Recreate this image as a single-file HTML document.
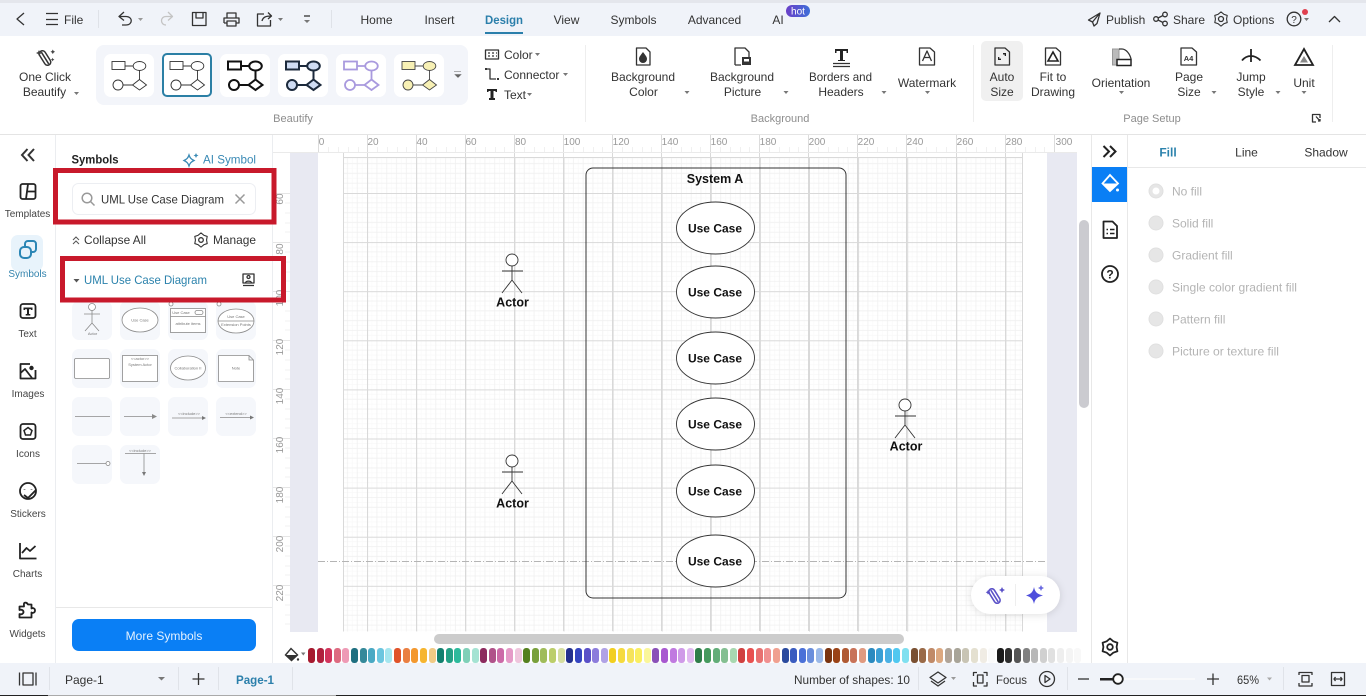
<!DOCTYPE html>
<html lang="en"><head><meta charset="utf-8"><title>UML Use Case Diagram</title>
<style>
html,body{margin:0;padding:0;background:#fff}
#p{position:relative;width:1366px;height:696px;overflow:hidden;background:#fff}
svg{position:absolute;left:0;top:0}
text{font-family:"Liberation Sans",sans-serif;font-size:12px;fill:#333}
.m{text-anchor:middle}
.l{font-size:11px;fill:#8d8d8d}
.s{font-size:10px;fill:#444;text-anchor:middle}
.r{font-size:10px;fill:#999;text-anchor:middle}
.g{fill:#b4b4b4}
.b{font-weight:bold;fill:#111;text-anchor:middle}
.i{fill:none;stroke:#333;stroke-width:1.3;stroke-linejoin:round}
.k{fill:none;stroke:#222;stroke-width:1.8;stroke-linejoin:round}
.t{font-size:4px;fill:#777;text-anchor:middle}
#c{position:absolute;left:308px;top:647.5px;display:flex}
#c i{display:block;width:7px;height:15px;border-radius:3px;margin-right:1.62px}
</style></head><body><div id="p">
<svg width="1366" height="696" viewBox="0 0 1366 696">
<defs>
<pattern id="gr" width="49.1" height="49.1" patternUnits="userSpaceOnUse" patternTransform="translate(318 193)">
<path d="M4.9 0V49.1M14.73 0V49.1M24.55 0V49.1M34.37 0V49.1M44.2 0V49.1M0 4.9H49.1M0 14.73H49.1M0 24.55H49.1M0 34.37H49.1M0 44.2H49.1" stroke="#f8f8f8" stroke-width=".6" fill="none"/>
<path d="M9.82 0V49.1M19.64 0V49.1M29.46 0V49.1M39.28 0V49.1M0 9.82H49.1M0 19.64H49.1M0 29.46H49.1M0 39.28H49.1" stroke="#f0f0f0" stroke-width=".8" fill="none"/>
<path d="M.5 0V49.1M0 .5H49.1" stroke="#d9d9d9" stroke-width="1" fill="none"/>
</pattern>
<g id="fl">
<rect x="8" y="7.5" width="13" height="8" />
<ellipse cx="35.5" cy="12" rx="6.3" ry="4.5"/>
<circle cx="14" cy="31" r="5"/>
<path d="M35.5 25.5L42.5 31L35.5 36L28.5 31Z"/>
<path d="M21 12H29M35.5 16.5V25.5M28.5 31H19" fill="none"/>
</g>
<g id="ac">
<circle cx="0" cy="6" r="6"/><path d="M-10 17H11M0 12V26M0 26L-10 39M0 26L10 39"/>
</g>
<g id="rd"><circle r="7" fill="#e6e6e6" stroke="#e0e0e0"/></g>
<path id="gear" d="M0 -8.5L3.3 -5.7L7.4 -4.25L6.6 0L7.4 4.25L3.3 5.7L0 8.5L-3.3 5.7L-7.4 4.25L-6.6 0L-7.4 -4.25L-3.3 -5.7Z"/>
<linearGradient id="h" x1="0" x2="1"><stop offset="0" stop-color="#6a3fc8"/><stop offset="1" stop-color="#3f6fd8"/></linearGradient>
</defs>

<!-- title bar -->
<rect width="1366" height="36" fill="#f0f3f9"/>
<rect width="1366" height="3" fill="#e4e6ec"/>
<rect y="134" width="1366" height="1" fill="#e4e4e4"/>
<path class="i" d="M24 13L17 19L24 25"/>
<path class="i" d="M46 13.5H58M46 19.5H58M46 24.5H58"/>
<text x="64" y="24">File</text>
<path stroke="#dfe2e8" d="M98.5 10V28M331.5 10V28"/>
<path class="i" d="M124 12L119 16.5L124 20.5M119.5 16.5H126C133 16.5 133 25 126 25H122"/>
<path d="M138 18h5l-2.5 3z" fill="#999"/>
<path class="i" style="stroke:#c4c4c4" d="M168 12L172.5 16.5L168 20.5M172 16.5H166C160 16.5 160 25 166 25"/>
<path class="i" d="M192.5 12.5H206V25.5H192.5ZM196 12.5V18H203V12.5"/>
<path class="i" d="M227 18V13H236V18M224 23V18H239V23H236M227 23V21H236V26H227V23H224"/>
<path class="i" d="M264 14H257.5V26H270.5V20M262 21C263 17 266 16 271 16M268 12.5L271.5 16L268 19"/>
<path d="M278 18h5l-2.5 3zM304 20h6l-3 3z" fill="#777"/>
<path class="i" d="M304 16H310"/>
<text class="m" x="376.5" y="24">Home</text>
<text class="m" x="439.5" y="24">Insert</text>
<text class="m" x="504" y="24" style="font-weight:bold;fill:#2b7fab" textLength="38" lengthAdjust="spacingAndGlyphs">Design</text>
<rect x="485" y="32" width="38" height="2" fill="#2b7fab"/>
<text class="m" x="566.5" y="24">View</text>
<text class="m" x="633.5" y="24">Symbols</text>
<text class="m" x="714.5" y="24">Advanced</text>
<text class="m" x="778" y="24">AI</text>
<rect x="786" y="5" width="24" height="12" rx="6" fill="url(#h)"/>
<text class="m" x="798" y="14.5" style="font-size:10px;fill:#fff">hot</text>
<path class="i" d="M1100 13L1088.5 20L1092.5 22L1094 26L1097 23.5L1100 13ZM1092.5 22L1100 13"/>
<text x="1106" y="24">Publish</text>
<circle class="i" cx="1156" cy="19" r="2.3"/><circle class="i" cx="1165" cy="14.5" r="2.3"/><circle class="i" cx="1165" cy="23.5" r="2.3"/><path class="i" d="M1158 18L1163 15.5M1158 20L1163 22.5"/>
<text x="1173" y="24">Share</text>
<use href="#gear" transform="translate(1221 19) scale(.84)" class="i"/><circle class="i" cx="1221" cy="19" r="2.5"/>
<text x="1233" y="24">Options</text>
<circle class="i" cx="1294" cy="19" r="6.8"/><text class="m" x="1294" y="23" style="font-size:10px">?</text>
<circle cx="1305" cy="12" r="3" fill="#e0404f"/><path d="M1304 18h5l-2.5 3z" fill="#777"/>
<path class="i" d="M1329 22L1334.5 16.5L1340 22"/>

<!-- one click -->
<g transform="translate(45 58) rotate(-32)" fill="none" stroke="#333" stroke-width="1.5"><rect x="-3.2" y="-8" width="6.4" height="16" rx="3.2"/><path d="M0 -7V7"/></g>
<path d="M38 52l1-2 1 2 2 1-2 1-1 2-1-2-2-1zM52 51l.8-1.5.8 1.5 1.5.8-1.5.8-.8 1.5-.8-1.5-1.5-.8zM52 59l.6-1.2.6 1.2 1.2.6-1.2.6-.6 1.2-.6-1.2-1.2-.6z" fill="#444"/>
<text class="m" x="45" y="81">One Click</text><text class="m" x="44.5" y="96">Beautify</text>
<path d="M74 92h5l-2.5 3z" fill="#777"/>

<!-- beautify -->
<rect x="96" y="45" width="372" height="60" rx="8" fill="#f3f5fa"/>
<g fill="#fff"><rect x="104" y="54" width="50" height="43" rx="7"/><rect x="220" y="54" width="50" height="43" rx="7"/><rect x="278" y="54" width="50" height="43" rx="7"/><rect x="336" y="54" width="50" height="43" rx="7"/><rect x="394" y="54" width="50" height="43" rx="7"/></g>
<rect x="163" y="54" width="48" height="42" rx="4" fill="#fff" stroke="#2b7fa5" stroke-width="2"/>
<use href="#fl" x="104" y="54" fill="#fff" stroke="#333" stroke-width=".9"/>
<use href="#fl" x="162" y="54" fill="#fff" stroke="#333" stroke-width=".9"/>
<use href="#fl" x="220" y="54" fill="#fff" stroke="#111" stroke-width="2"/>
<use href="#fl" x="278" y="54" fill="#cfdcf3" stroke="#1c2a3c" stroke-width="2"/>
<use href="#fl" x="336" y="54" fill="#fff" stroke="#a99ade" stroke-width="1.8"/>
<use href="#fl" x="394" y="54" fill="#f7f0b4" stroke="#444" stroke-width=".9"/>
<path d="M454 71.5H461M455 74.5h6l-3 3z" stroke="#666" fill="#666" stroke-width=".6"/>
<text class="l m" x="293" y="122">Beautify</text>

<!-- color connector text -->
<path class="i" d="M485.5 50H498.5V59H485.5ZM488 53H490M492 53H494M496 53H497M488 56H490M492 56H494M496 56H497"/>
<text x="504" y="59">Color</text><path d="M535 53h5l-2.5 3z" fill="#777"/>
<path class="i" d="M487 69H490V79H496" stroke-width="1.5"/><rect x="485" y="68" width="2" height="2" fill="#333"/><rect x="497" y="78" width="2" height="2" fill="#333"/>
<text x="504" y="79">Connector</text><path d="M563 73h5l-2.5 3z" fill="#777"/>
<path d="M487 89H497V92H495.5V91H493.5V98H495V100H489V98H490.5V91H488.5V92H487Z" fill="#222"/>
<text x="504" y="99">Text</text><path d="M527 93h5l-2.5 3z" fill="#777"/>
<path stroke="#eee" d="M585.5 45V122M973.5 45V122M1332.5 45V122"/>

<!-- background group -->
<path class="i" d="M636.5 48H646L650 52V65H636.5Z"/><path d="M643 52C646 56 647 57 647 59A4 4 0 0 1 639 59C639 57 640 56 643 52Z" fill="#333"/>
<text class="m" x="643" y="81">Background</text><text class="m" x="643.5" y="96">Color</text><path d="M684.5 91h5l-2.5 3z" fill="#777"/>
<path class="i" d="M735 65V48H745L749 52V57M735 65H741"/><rect x="742" y="57" width="9" height="8" fill="#333"/><rect x="744" y="59" width="5" height="2.5" fill="#fff"/>
<text class="m" x="742" y="81">Background</text><text class="m" x="742.5" y="96">Picture</text><path d="M783.5 91h5l-2.5 3z" fill="#777"/>
<path d="M835 49H848V53H846.5V51H843V60H845V61H838V60H840V51H836.5V53H835Z" fill="#222"/><path stroke="#333" stroke-width="1.3" d="M833 63.5H850M833 66.5H850"/>
<text class="m" x="840.5" y="81" textLength="63" lengthAdjust="spacingAndGlyphs">Borders and</text><text class="m" x="841" y="96">Headers</text><path d="M881.5 91h5l-2.5 3z" fill="#777"/>
<path class="i" d="M919.5 48H930L934.5 52V65H919.5Z"/><path class="i" d="M922.5 61L927 51L931.5 61M924.5 57.5H929.5" stroke-width="1.5"/>
<text class="m" x="927" y="87">Watermark</text><path d="M925 91h5l-2.5 3z" fill="#777"/>

<!-- page setup -->
<rect x="981" y="41" width="42" height="60" rx="5" fill="#f0f0f0"/>
<path class="i" d="M995 48H1005L1009.5 52V65H995Z"/><path d="M1003 53h3v3h-1.3v-1.5h-1.7zM998 57h1.3v1.6h1.7v1.4h-3z" fill="#222"/>
<text class="m" x="1002" y="81">Auto</text><text class="m" x="1002" y="96">Size</text>
<path class="i" d="M1045.5 48H1056L1060.5 52V65H1045.5Z"/><path d="M1053 52L1058 61H1048Z" fill="none" stroke="#222" stroke-width="1.6"/>
<text class="m" x="1053" y="81">Fit to</text><text class="m" x="1053" y="96">Drawing</text>
<path d="M1112.5 65V49H1119V65Z" fill="#bbb" stroke="#999"/><path class="i" d="M1119 49H1122C1126 49 1130 54 1131 59"/><rect x="1117" y="59.5" width="14" height="6" fill="#fff" stroke="#222" stroke-width="1.5"/>
<text class="m" x="1121" y="87">Orientation</text><path d="M1119 91h5l-2.5 3z" fill="#777"/>
<path class="i" d="M1181 48H1192L1196.5 52V65H1181Z"/><text class="m" x="1188.5" y="61" style="font-size:7.5px;font-weight:bold">A4</text>
<text class="m" x="1189" y="81">Page</text><text class="m" x="1189" y="96">Size</text><path d="M1211.5 91h5l-2.5 3z" fill="#777"/>
<path class="k" d="M1242 60.5C1244 58 1247 56 1251 56C1255 56 1258 58 1260.5 60.5M1251 49V62" stroke-width="1.7"/>
<text class="m" x="1251" y="81">Jump</text><text class="m" x="1251" y="96">Style</text><path d="M1275.5 91h5l-2.5 3z" fill="#777"/>
<path d="M1304 49L1313 65H1295Z" fill="none" stroke="#222" stroke-width="1.8"/><path d="M1304 56L1308 62.5H1300Z" fill="#888"/>
<text class="m" x="1304" y="87">Unit</text><path d="M1301.5 91h5l-2.5 3z" fill="#777"/>
<text class="l m" x="1152" y="122">Page Setup</text>
<text class="l m" x="780" y="122">Background</text>
<path class="i" d="M1316 122H1312.5V114.5H1320V118M1316 116.5L1320 121M1320 119V121H1318" stroke-width="1"/>

<!-- canvas -->
<rect x="273" y="135" width="804" height="17" fill="#fff"/>
<rect x="290" y="152" width="787" height="480" fill="#e8e9f2"/>
<rect x="318" y="152" width="729" height="480" fill="#fff"/>
<rect x="343" y="157" width="680" height="474.5" fill="url(#gr)"/>
<path stroke="#d9d9d9" fill="none" d="M343.5 152V631.5M1022.5 152V631.5M367.5 152V631M416.5 152V631M465.5 152V631M514.5 152V631M563.5 152V631M612.5 152V631M661.5 152V631M710.5 152V631M759.5 152V631M808.5 152V631M857.5 152V631M906.5 152V631M956.5 152V631M1005.5 152V631M343 157.5H1023"/>
<!-- rulers -->
<path stroke="#dcdcdc" d="M318.5 135V152M367.5 135V152M416.5 135V152M465.5 135V152M514.5 135V152M563.5 135V152M612.5 135V152M661.5 135V152M710.5 135V152M759.5 135V152M808.5 135V152M857.5 135V152M906.5 135V152M956.5 135V152M1005.5 135V152M1054.5 135V152"/>
<path stroke="#eaeaea" d="M273 152.5H1077"/>
<path stroke="#f0f0f0" d="M328.5 147V152M338.5 147V152M348.5 147V152M358.5 147V152M377.5 147V152M387.5 147V152M397.5 147V152M406.5 147V152M426.5 147V152M436.5 147V152M446.5 147V152M455.5 147V152M475.5 147V152M485.5 147V152M495.5 147V152M504.5 147V152M524.5 147V152M534.5 147V152M544.5 147V152M553.5 147V152M573.5 147V152M583.5 147V152M593.5 147V152M602.5 147V152M622.5 147V152M632.5 147V152M642.5 147V152M651.5 147V152M671.5 147V152M681.5 147V152M691.5 147V152M700.5 147V152M720.5 147V152M730.5 147V152M740.5 147V152M749.5 147V152M769.5 147V152M779.5 147V152M789.5 147V152M798.5 147V152M818.5 147V152M828.5 147V152M838.5 147V152M847.5 147V152M867.5 147V152M877.5 147V152M887.5 147V152M896.5 147V152M916.5 147V152M926.5 147V152M936.5 147V152M946.5 147V152M966.5 147V152M976.5 147V152M986.5 147V152M995.5 147V152M1015.5 147V152M1025.5 147V152M1035.5 147V152M1044.5 147V152"/>
<g><text class="r" x="321.5" y="145">0</text><text class="r" x="373" y="145">20</text><text class="r" x="422" y="145">40</text><text class="r" x="471" y="145">60</text><text class="r" x="520.5" y="145">80</text><text class="r" x="572" y="145">100</text><text class="r" x="621" y="145">120</text><text class="r" x="670" y="145">140</text><text class="r" x="719" y="145">160</text><text class="r" x="768" y="145">180</text><text class="r" x="817" y="145">200</text><text class="r" x="866" y="145">220</text><text class="r" x="915" y="145">240</text><text class="r" x="965" y="145">260</text><text class="r" x="1014" y="145">280</text><text class="r" x="1064" y="145">300</text></g>
<path stroke="#e6e6e6" d="M273 242.5H290M273 291.5H290M273 340.5H290M273 389.5H290M273 438.5H290M273 487.5H290M273 536.5H290M273 585.5H290M273 193.5H290"/>
<path stroke="#f2f2f2" d="M285 203H290M285 213H290M285 223H290M285 232H290M285 252H290M285 262H290M285 272H290M285 281H290M285 301H290M285 311H290M285 321H290M285 330H290M285 350H290M285 360H290M285 370H290M285 379H290M285 399H290M285 409H290M285 419H290M285 428H290M285 448H290M285 458H290M285 468H290M285 477H290M285 497H290M285 507H290M285 517H290M285 526H290M285 546H290M285 556H290M285 566H290M285 575H290M285 595H290M285 605H290M285 615H290M285 624H290"/>
<g><text class="r" transform="translate(283 199) rotate(-90)">60</text><text class="r" transform="translate(283 249) rotate(-90)">80</text><text class="r" transform="translate(283 298) rotate(-90)">100</text><text class="r" transform="translate(283 347) rotate(-90)">120</text><text class="r" transform="translate(283 396) rotate(-90)">140</text><text class="r" transform="translate(283 445) rotate(-90)">160</text><text class="r" transform="translate(283 495) rotate(-90)">180</text><text class="r" transform="translate(283 544) rotate(-90)">200</text><text class="r" transform="translate(283 593) rotate(-90)">220</text></g>

<!-- diagram -->
<path d="M318 561.5H1047" stroke="#b4b4b4" stroke-dasharray="7 2 1 2" fill="none"/>
<rect x="586" y="168" width="260" height="430" rx="7" fill="none" stroke="#333" stroke-width="1"/>
<text class="b" x="715" y="183" style="font-size:12.5px">System A</text>
<g fill="#fff" stroke="#333" stroke-width=".9">
<ellipse cx="715.5" cy="228" rx="39" ry="26"/><ellipse cx="715.5" cy="292" rx="39" ry="26"/><ellipse cx="715.5" cy="358" rx="39" ry="26"/><ellipse cx="715.5" cy="424" rx="39" ry="26"/><ellipse cx="715.5" cy="491" rx="39" ry="26"/><ellipse cx="715.5" cy="561" rx="39" ry="26"/>
</g>
<text class="b" x="715" y="232.5">Use Case</text><text class="b" x="715" y="296.5">Use Case</text><text class="b" x="715" y="362.5">Use Case</text><text class="b" x="715" y="428.5">Use Case</text><text class="b" x="715" y="495.5">Use Case</text><text class="b" x="715" y="565.5">Use Case</text>
<g fill="#fff" stroke="#333" stroke-width=".9"><use href="#ac" x="512" y="254"/><use href="#ac" x="512" y="455"/><use href="#ac" x="905" y="399"/></g>
<text class="b" x="512.5" y="306.5" style="font-size:12.5px">Actor</text><text class="b" x="512.5" y="507.5" style="font-size:12.5px">Actor</text><text class="b" x="906" y="450.5" style="font-size:12.5px">Actor</text>
<rect x="971" y="576" width="89" height="38" rx="19" fill="#fff" style="filter:drop-shadow(0 1px 4px rgba(0,0,0,.12))"/>
<path d="M1015.5 584V606" stroke="#eee"/>
<g transform="translate(994.5 596) rotate(-32)" fill="none" stroke="#5b52c8" stroke-width="1.6"><rect x="-3" y="-8" width="6" height="16" rx="3"/><path d="M0 -7V7"/></g>
<path d="M1002 587l1 2 2 1-2 1-1 2-1-2-2-1 2-1zM988 590l.8 1.5 1.5.8-1.5.8-.8 1.5-.8-1.5-1.5-.8 1.5-.8z" fill="#5b52c8"/>
<path d="M1034 587C1035 592 1037 594 1043 595.5C1037 597 1035 599 1034 604C1033 599 1031 597 1026 595.5C1031 594 1033 592 1034 587Z" fill="#4f4fdc"/>
<path d="M1041 585l1 2 2 1-2 1-1 2-1-2-2-1 2-1z" fill="#6a6ae0"/>

<!-- scrollbars -->
<rect x="1077" y="135" width="14" height="528" fill="#fff"/>
<rect x="1079" y="220" width="10" height="188" rx="5" fill="#cbcbd0"/>
<rect x="434" y="634" width="470" height="10" rx="5" fill="#cccccc"/>
<path d="M1091.5 135V663" stroke="#e8e8e8"/>
<path d="M291 648.5L297.5 655L291.5 660.5L285.5 655Z" fill="none" stroke="#333" stroke-width="1.4"/><path d="M285.5 655H297.5L291.5 660.5Z" fill="#333"/><circle cx="298" cy="659.5" r="1.2" fill="#333"/>
<path d="M301 652.5h4.5l-2.2 3z" fill="#777"/>

<!-- left nav -->
<rect y="135" width="56" height="528" fill="#fff"/>
<path d="M55.5 135V663M272.5 135V663" stroke="#ebedf0"/>
<path d="M27.5 149L22 155L27.5 161M34 149L28.5 155L34 161" fill="none" stroke="#333" stroke-width="2"/>
<g class="k"><rect x="20.5" y="184" width="15" height="15" rx="2"/><path d="M28 184L26 199M27 191.5H35.5"/></g>
<text class="s" x="27.5" y="217">Templates</text>
<rect x="11" y="235" width="32" height="36" rx="7" fill="#e8f3fb"/>
<g fill="none" stroke="#2b86b5" stroke-width="2"><rect x="25" y="241" width="11" height="11" rx="3"/><rect x="20" y="247" width="11" height="11" rx="4" fill="#e8f3fb"/></g>
<text class="s" x="27.5" y="277" style="fill:#3283ad">Symbols</text>
<g class="k"><rect x="20.5" y="304" width="15" height="14" rx="2.5"/></g><path d="M23.5 307.5H32.5V310H31V309.3H29V314H30.3V315.5H25.7V314H27V309.3H25V310H23.5Z" fill="#222"/>
<text class="s" x="27.5" y="337">Text</text>
<g class="k"><path d="M35.5 370V378.5H20.5V364H30"/><path d="M20.5 373L25 369L32 378"/></g><circle cx="31.5" cy="368" r="2.2" fill="#222"/>
<text class="s" x="28" y="397">Images</text>
<g class="k"><rect x="20.5" y="424" width="15" height="15" rx="2.5"/></g><path d="M28 427.5L32 430.5L30.5 435H25.5L24 430.5Z" fill="none" stroke="#222" stroke-width="1.5"/>
<text class="s" x="28" y="457">Icons</text>
<circle class="k" cx="28" cy="491" r="8"/><path class="k" d="M24.5 489V489.5M31.5 489V489.5M24 495L28 498L36 490" stroke-width="1.6"/>
<text class="s" x="28" y="517">Stickers</text>
<path class="k" d="M20 543V558.5H36.5M22 553L26.5 548L30 551L35.5 546" stroke-width="1.5"/>
<text class="s" x="27.5" y="577">Charts</text>
<path class="k" d="M24 603.5C24.5 602 27 602.5 28 604.5H31.5V608.5C33 607.5 35 608.5 35 610.5C35 612.5 33 613.5 31.5 612.5V617.5H19.5V614C21.5 615 23.5 613.5 23.5 612C23.5 610.5 21.5 609 19.5 610V606.5H24C24 605.5 23.8 604.5 24 603.5Z" stroke-width="1.5"/>
<text class="s" x="27.5" y="637">Widgets</text>

<!-- symbols panel -->
<text x="71.5" y="163.5" style="font-weight:bold;fill:#222;font-size:11.5px" textLength="47" lengthAdjust="spacingAndGlyphs">Symbols</text>
<path d="M189 155C190 158 191 159 194 160.5C191 162 190 163 189 166C188 163 187 162 184 160.5C187 159 188 158 189 155Z" fill="none" stroke="#3a8ab5" stroke-width="1.3"/><path d="M196 153l.8 1.7 1.7.8-1.7.8-.8 1.7-.8-1.7-1.7-.8 1.7-.8z" fill="#3a8ab5"/>
<text x="203" y="163.5" style="fill:#3a8ab5" textLength="53" lengthAdjust="spacingAndGlyphs">AI Symbol</text>
<rect x="72.5" y="183.5" width="183" height="31" rx="6" fill="#fff" stroke="#eceef2"/>
<circle cx="87" cy="198" r="4.8" fill="none" stroke="#999" stroke-width="1.5"/><path d="M90.5 201.5L94.5 205.5" stroke="#999" stroke-width="1.5"/>
<text x="101" y="203.5" style="fill:#333" textLength="123" lengthAdjust="spacingAndGlyphs">UML Use Case Diagram</text>
<path d="M235.5 194.5L244.5 203.5M244.5 194.5L235.5 203.5" stroke="#999" stroke-width="1.5"/>
<path d="M73 240L76 237L79 240M73 244L76 241L79 244" fill="none" stroke="#555"/>
<text x="84" y="244" textLength="62" lengthAdjust="spacingAndGlyphs">Collapse All</text>
<use href="#gear" transform="translate(201 240) scale(.84)" class="i"/><circle class="i" cx="201" cy="240" r="2.3"/>
<text x="213" y="244" textLength="43" lengthAdjust="spacingAndGlyphs">Manage</text>
<path d="M73.5 279h6l-3 3.5z" fill="#555"/>
<text x="84" y="284" style="fill:#2b82ac" textLength="123" lengthAdjust="spacingAndGlyphs">UML Use Case Diagram</text>
<path class="i" d="M243 274H254V283H243ZM243 285.5H254" stroke-width="1"/><circle class="i" cx="248.5" cy="277" r="1.5" stroke-width="1"/><path class="i" d="M245.5 283C245.5 280.5 251.5 280.5 251.5 283" stroke-width="1"/>

<!-- shape tiles -->
<g fill="#f5f7fb">
<rect x="72" y="301" width="40" height="39" rx="7"/><rect x="120" y="301" width="40" height="39" rx="7"/><rect x="168" y="301" width="40" height="39" rx="7"/><rect x="216" y="301" width="40" height="39" rx="7"/>
<rect x="72" y="349" width="40" height="39" rx="7"/><rect x="120" y="349" width="40" height="39" rx="7"/><rect x="168" y="349" width="40" height="39" rx="7"/><rect x="216" y="349" width="40" height="39" rx="7"/>
<rect x="72" y="397" width="40" height="39" rx="7"/><rect x="120" y="397" width="40" height="39" rx="7"/><rect x="168" y="397" width="40" height="39" rx="7"/><rect x="216" y="397" width="40" height="39" rx="7"/>
<rect x="72" y="445" width="40" height="39" rx="7"/><rect x="120" y="445" width="40" height="39" rx="7"/>
</g>
<g fill="#fff" stroke="#8a8a8a" stroke-width=".8">
<circle cx="92" cy="307" r="3.5"/><path d="M84 314H100M92 310.5V323M92 323L85 331M92 323L99 331" fill="none"/>
<ellipse cx="140" cy="320" rx="18" ry="12"/>
<rect x="170.5" y="308.5" width="35" height="24"/><path d="M170.5 316.5H205.5" fill="none"/><rect x="195" y="310.5" width="8" height="4" rx="2"/>
<circle cx="171" cy="304" r="2"/><circle cx="219" cy="304" r="2"/>
<ellipse cx="236" cy="321" rx="18" ry="12"/><path d="M218 321H254" fill="none"/>
<rect x="74.5" y="358.5" width="35" height="20" rx="1.5"/>
<rect x="122.5" y="355.5" width="35" height="26"/>
<ellipse cx="188" cy="368" rx="17.5" ry="12"/>
<path d="M218.5 355.5H249L253.5 360V381.5H218.5ZM249 355.5V360H253.5"/>
<g fill="none"><path d="M75 416.5H110M124 416.5H152"/><path d="M172 418H202M220 417.5H250M77 463.5H108M125 453.5H156M144 453.5V472"/></g>
</g>
<path d="M152 414l5 2.5-5 2.5z" fill="#8a8a8a"/><path d="M202 416l4 2-4 2zM250 415.5l4 2-4 2zM142 472h4l-2 4z" fill="#777"/><circle cx="108" cy="463.5" r="2" fill="#fff" stroke="#888" stroke-width=".8"/>
<text class="t" x="92.5" y="335">Actor</text><text class="t" x="140" y="321.5">Use Case</text><text class="t" x="181" y="314">Use Case</text><text class="t" x="188" y="325">attribute items</text><text class="t" x="236" y="318">Use Case</text><text class="t" x="236" y="326">Extension Points</text><text class="t" x="140" y="360">&lt;&lt;actor&gt;&gt;</text><text class="t" x="140" y="366">System Actor</text><text class="t" x="188" y="369.5">Collaboration II</text><text class="t" x="236" y="369.5">Note</text><text class="t" x="189" y="415">&lt;&lt;include&gt;&gt;</text><text class="t" x="236" y="415">&lt;&lt;extend&gt;&gt;</text><text class="t" x="140" y="452">&lt;&lt;include&gt;&gt;</text>

<path d="M56 607.5H272" stroke="#e8e8e8"/>
<rect x="72" y="619" width="184" height="32" rx="7" fill="#0a7ff5"/>
<text class="m" x="164" y="640" style="fill:#e3f1ff">More Symbols</text>

<!-- right rail -->
<path d="M1103.5 146L1109 151.5L1103.5 157M1110 146L1115.5 151.5L1110 157" fill="none" stroke="#222" stroke-width="2"/>
<rect x="1092" y="167" width="35" height="35" fill="#0a7ff5"/>
<path d="M1110 175L1118 183.5L1110 191L1102.5 183.5Z" fill="none" stroke="#fff" stroke-width="1.8"/><path d="M1103 183.5H1118L1110 191Z" fill="#fff"/><circle cx="1117.5" cy="190" r="1.5" fill="#fff"/>
<path class="k" d="M1103.5 221.5H1112.5L1117 226V238H1103.5Z" stroke-width="1.8"/><path d="M1106.5 229.5H1108M1110 229.5H1114.5M1106.5 233.5H1108M1110 233.5H1114.5" stroke="#222" stroke-width="1.5" fill="none"/>
<circle class="k" cx="1110" cy="274" r="8" stroke-width="1.7"/><text class="m" x="1110" y="278.5" style="font-weight:bold;font-size:12px;fill:#222">?</text>
<use href="#gear" x="1110" y="647" class="k"/><circle class="k" cx="1110" cy="647" r="2.8" stroke-width="1.5"/>
<path d="M1127.5 135V663" stroke="#e8e8e8"/>
<text class="m" x="1168" y="156.5" style="font-weight:bold;fill:#2b82ac">Fill</text>
<text class="m" x="1246.5" y="156.5">Line</text><text class="m" x="1326" y="156.5">Shadow</text>
<path d="M1127 167.5H1366" stroke="#e8e8e8"/>
<use href="#rd" x="1156" y="191"/><circle cx="1156" cy="191" r="3.5" fill="#fff"/>
<use href="#rd" x="1156" y="223"/><use href="#rd" x="1156" y="255"/><use href="#rd" x="1156" y="287"/><use href="#rd" x="1156" y="319"/><use href="#rd" x="1156" y="351"/>
<text class="g" x="1172" y="195.5">No fill</text><text class="g" x="1172" y="227.5">Solid fill</text><text class="g" x="1172" y="259.5">Gradient fill</text><text class="g" x="1172" y="291.5" textLength="125" lengthAdjust="spacingAndGlyphs">Single color gradient fill</text><text class="g" x="1172" y="323.5">Pattern fill</text><text class="g" x="1172" y="355.5" textLength="107" lengthAdjust="spacingAndGlyphs">Picture or texture fill</text>

<!-- bottom bar -->
<rect y="663" width="1366" height="33" fill="#f0f3f9"/>
<rect y="695" width="1366" height="1" fill="#222"/><rect x="48" y="695" width="288" height="1" fill="#aaa"/>
<path stroke="#e0e3e9" d="M49.5 667V690M178.5 667V690M218.5 667V690M292.5 667V690M918.5 667V690M1067.5 667V690M1283.5 667V690"/>
<path class="i" d="M19.5 672.5V685.5M36 672.5V685.5M23 673H33V685H23Z"/>
<text x="65" y="684">Page-1</text><path d="M158 677h7l-3.5 3.5z" fill="#777"/>
<path class="i" d="M198.5 673V685M192.5 679H204.5"/>
<text x="236" y="684" style="font-weight:bold;fill:#2b7fab" textLength="38" lengthAdjust="spacingAndGlyphs">Page-1</text>
<text x="794" y="684" textLength="116" lengthAdjust="spacingAndGlyphs">Number of shapes: 10</text>
<path class="i" d="M938 672L946 677.5L938 683L930 677.5ZM931 681L938 686L945 681"/><path d="M951 677h5l-2.5 3z" fill="#999"/>
<path class="i" d="M973.5 676V672.5H977M983.5 672.5H987V676M987 682V686H983.5M977 686H973.5V682M977.5 675H983V683H977.5Z"/>
<text x="996" y="684" textLength="31" lengthAdjust="spacingAndGlyphs">Focus</text>
<circle class="i" cx="1047" cy="679" r="7.5"/><path class="i" d="M1045 675.5L1050 679L1045 682.5Z" stroke-width="1"/>
<path class="i" d="M1078 679H1089"/>
<rect x="1100" y="678" width="95" height="2" fill="#f8f9fb"/>
<rect x="1100" y="678" width="16" height="2.5" fill="#222"/><circle cx="1118" cy="679" r="4.8" fill="#fff" stroke="#222" stroke-width="1.8"/>
<path class="i" d="M1213 673.5V685M1207 679H1219"/>
<text x="1237" y="684" textLength="22" lengthAdjust="spacingAndGlyphs">65%</text><path d="M1267 677.5h5l-2.5 3z" fill="#aaa"/>
<path class="i" d="M1299 675V672.5H1312V675M1312 683V686H1299V683M1302 675.5H1309V682H1302Z"/>
<path class="i" d="M1331.5 672.5H1344.5V685.5H1331.5ZM1334 679H1342M1335.5 677L1334 679L1335.5 681M1340.5 677L1342 679L1340.5 681" stroke-width="1.1"/>
</svg>
<div id="c"><i style="background:#a6192e"></i><i style="background:#b01f3c"></i><i style="background:#d2345c"></i><i style="background:#dd6a80"></i><i style="background:#ee9ab5"></i><i style="background:#1f6f80"></i><i style="background:#35899a"></i><i style="background:#4aa9c4"></i><i style="background:#6cc6df"></i><i style="background:#a5e6ef"></i><i style="background:#e0532a"></i><i style="background:#ea7f42"></i><i style="background:#f3982f"></i><i style="background:#f6b52f"></i><i style="background:#f0ca85"></i><i style="background:#12806f"></i><i style="background:#23a085"></i><i style="background:#2dba9c"></i><i style="background:#7fd0b8"></i><i style="background:#a5e3d3"></i><i style="background:#8c2a5e"></i><i style="background:#b0528a"></i><i style="background:#cc6aa8"></i><i style="background:#e59ac8"></i><i style="background:#efc5dd"></i><i style="background:#55801f"></i><i style="background:#79a03c"></i><i style="background:#a0bc5a"></i><i style="background:#bcce6a"></i><i style="background:#d6dea0"></i><i style="background:#24308e"></i><i style="background:#3444c0"></i><i style="background:#5a50c8"></i><i style="background:#8c7cdc"></i><i style="background:#b0a2e6"></i><i style="background:#f2cf20"></i><i style="background:#f5da3e"></i><i style="background:#f5e35a"></i><i style="background:#faee60"></i><i style="background:#faf69a"></i><i style="background:#8a50b8"></i><i style="background:#a858d0"></i><i style="background:#c07ae0"></i><i style="background:#cf9ae8"></i><i style="background:#e0b8f0"></i><i style="background:#2f7d4a"></i><i style="background:#459a5e"></i><i style="background:#62ad78"></i><i style="background:#84bf92"></i><i style="background:#a8d8b0"></i><i style="background:#d04040"></i><i style="background:#e85050"></i><i style="background:#e87070"></i><i style="background:#f09090"></i><i style="background:#f0a090"></i><i style="background:#2a4a9e"></i><i style="background:#3a5cc0"></i><i style="background:#4a70d8"></i><i style="background:#6a8edc"></i><i style="background:#9ab8e8"></i><i style="background:#7a3410"></i><i style="background:#9a4216"></i><i style="background:#b05a34"></i><i style="background:#c87258"></i><i style="background:#e09a80"></i><i style="background:#2a8ac0"></i><i style="background:#3a9ed4"></i><i style="background:#4ab0e4"></i><i style="background:#50c8f0"></i><i style="background:#80e0f0"></i><i style="background:#7a5032"></i><i style="background:#9a6a48"></i><i style="background:#c08a68"></i><i style="background:#dca880"></i><i style="background:#b0a498"></i><i style="background:#a8a498"></i><i style="background:#c8c4b4"></i><i style="background:#e4e0d0"></i><i style="background:#f0ece4"></i><i style="background:#fafafa"></i><i style="background:#1a1a1a"></i><i style="background:#2e2e2e"></i><i style="background:#555"></i><i style="background:#808080"></i><i style="background:#b8b8b8"></i><i style="background:#d0d0d0"></i><i style="background:#e0e0e0"></i><i style="background:#eee"></i><i style="background:#f4f4f4"></i><i style="background:#f8f8f8"></i></div>
<svg width="1366" height="696" viewBox="0 0 1366 696" style="pointer-events:none">
<rect x="55.5" y="170.5" width="218.5" height="51.5" fill="none" stroke="#c8192b" stroke-width="5"/>
<rect x="62.5" y="258.5" width="221" height="41.5" fill="none" stroke="#c8192b" stroke-width="5"/>
</svg>
</div></body></html>
